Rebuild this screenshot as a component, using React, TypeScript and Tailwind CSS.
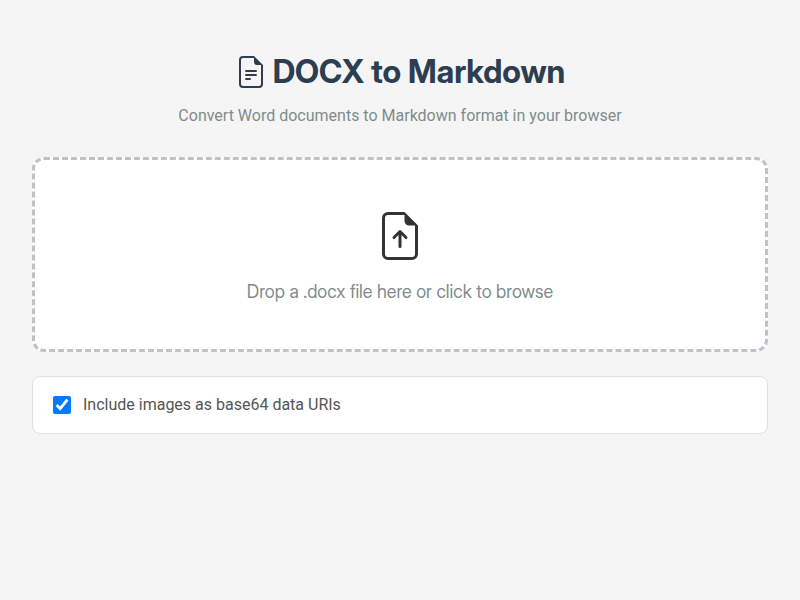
import { useState } from 'react';
import { BsFileEarmarkArrowUp, BsFileEarmarkText } from 'react-icons/bs';

function Header() {
  return (
    <header className="mb-[29px] text-center">
      <h1 className="mb-2 flex items-center justify-center gap-1.5 font-['Inter_Display','Inter',sans-serif] text-[32px] leading-12 font-bold text-[#2c3e50]">
        <BsFileEarmarkText aria-hidden="true" />
        DOCX to Markdown
      </h1>
      <p className="leading-6 text-[#7f8c8d]">
        Convert Word documents to Markdown format in your browser
      </p>
    </header>
  );
}

function DropZone({ onFile }: { onFile: (file: File | null) => void }) {
  return (
    <label
      className="mb-6 flex cursor-pointer flex-col items-center gap-4 rounded-xl border-3 border-dashed border-[#bdc3c7] bg-white px-8 pt-[52px] pb-[41px] text-[#7f8c8d]"
      onDragOver={(e) => e.preventDefault()}
      onDrop={(e) => {
        e.preventDefault();
        onFile(e.dataTransfer.files[0] ?? null);
      }}
    >
      <BsFileEarmarkArrowUp className="size-12 text-[#333333]" aria-hidden="true" />
      <span className="font-['Inter_Display','Inter',sans-serif] text-lg leading-8">
        Drop a .docx file here or click to browse
      </span>
      <input
        type="file"
        accept=".docx"
        className="sr-only"
        onChange={(e) => onFile(e.target.files?.[0] ?? null)}
      />
    </label>
  );
}

export default function App() {
  const [, setFile] = useState<File | null>(null);
  const [includeImages, setIncludeImages] = useState(true);

  return (
    <div className="min-h-screen bg-[#f5f5f5] font-['Roboto','Inter',sans-serif] text-[#333333]">
      <main className="mx-auto max-w-4xl px-8 py-12">
        <Header />
        <DropZone onFile={setFile} />
        <div className="rounded-lg border border-[#e0e0e0] bg-white px-5 py-4">
          <label className="flex cursor-pointer items-center gap-3 leading-6 text-[#555555]">
            <input
              type="checkbox"
              className="size-[18px] accent-[#007aff]"
              checked={includeImages}
              onChange={(e) => setIncludeImages(e.target.checked)}
            />
            Include images as base64 data URIs
          </label>
        </div>
      </main>
    </div>
  );
}
